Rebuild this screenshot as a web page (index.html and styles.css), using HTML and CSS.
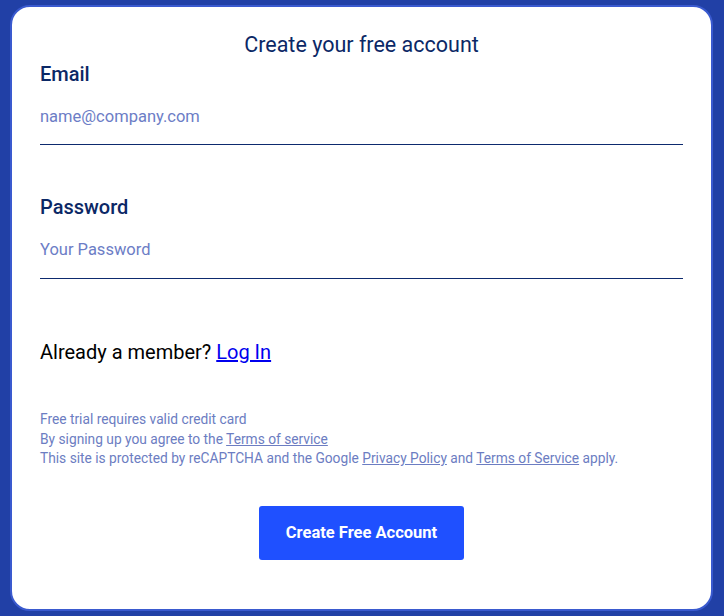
FILE: index.html
```html
<!DOCTYPE html>
<html lang="en">
<head>
<meta charset="utf-8">
<title>Create your free account</title>
<link rel="stylesheet" href="styles.css">
</head>
<body>
<main class="card">
  <h1 class="title">Create your free account</h1>
  <form class="form">
    <label class="field">
      <span class="label">Email</span>
      <input class="input" type="email" placeholder="name@company.com">
    </label>
    <label class="field field-password">
      <span class="label">Password</span>
      <input class="input" type="password" placeholder="Your Password">
    </label>
    <p class="member">Already a member? <a href="#" class="login">Log In</a></p>
    <div class="legal">
      <p>Free trial requires valid credit card</p>
      <p>By signing up you agree to the <a href="#">Terms of service</a></p>
      <p>This site is protected by reCAPTCHA and the Google <a href="#">Privacy Policy</a> and <a href="#">Terms of Service</a> apply.</p>
    </div>
    <div class="actions">
      <button type="button" class="btn">Create Free Account</button>
    </div>
  </form>
</main>
</body>
</html>
```
FILE: styles.css
```css
* { box-sizing: border-box; }
html, body { margin: 0; height: 100%; }
body {
  background: #2140a6;
  font-family: Roboto, "Liberation Sans", Arial, sans-serif;
  padding: 5px 11px 5px 10px;
}
.card {
  width: 703px;
  height: 606px;
  background: #fff;
  border: 2px solid #3a5acf;
  border-radius: 20px;
  padding: 22px 28px 0 28px;
}
.title {
  margin: 0;
  text-align: center;
  font-size: 21.5px;
  line-height: 32px;
  font-weight: 400;
  color: #0b2866;
}
.form { display: flex; flex-direction: column; }
.field { display: flex; flex-direction: column; }
.field-password { margin-top: 49px; }
.label {
  font-size: 20px;
  line-height: 24px;
  font-weight: 500;
  color: #0b2866;
  margin-top: 1px;
  margin-bottom: 2px;
}
.input {
  height: 57px;
  border: 0;
  border-bottom: 1px solid #0d2a6e;
  padding: 0;
  font-family: inherit;
  font-size: 16.5px;
  color: #0d2a6e;
  outline: none;
  background: transparent;
}
.field-password .input { height: 58px; }
.input::placeholder { color: #6c7dc6; }
.member {
  margin: 61px 0 0;
  font-size: 20px;
  line-height: 24px;
  color: #000;
}
.login { color: #0000ee; }
.legal {
  margin-top: 46px;
  font-size: 13.75px;
  line-height: 19.5px;
  color: #6c7dc2;
}
.legal p { margin: 0; }
.legal a { color: #6c7dc2; }
.actions {
  display: flex;
  justify-content: center;
  margin-top: 37px;
}
.btn {
  width: 205px;
  height: 54px;
  border: 0;
  border-radius: 3px;
  background: #1f50ff;
  color: #fff;
  font-family: inherit;
  font-size: 16.5px;
  font-weight: 700;
  cursor: pointer;
}
```
